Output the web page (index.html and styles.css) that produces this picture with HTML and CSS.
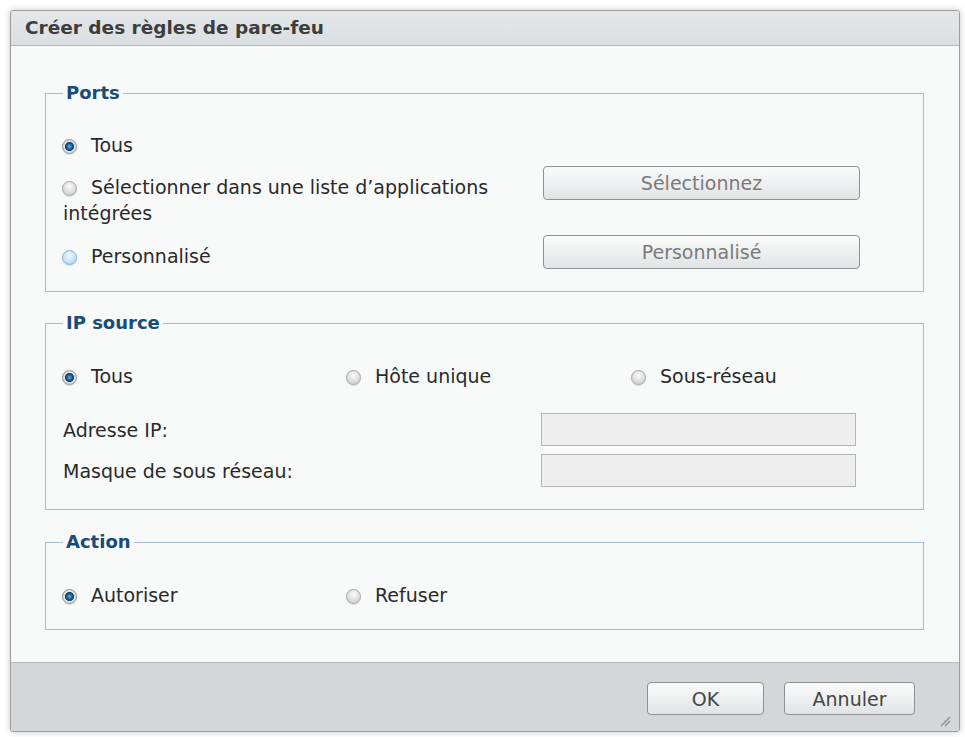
FILE: index.html
```html
<!DOCTYPE html>
<html lang="fr">
  <head>
    <meta charset="UTF-8" />
    <title>Créer des règles de pare-feu</title>
    <link rel="stylesheet" href="styles.css">
  </head>
  <body>
    <div class="dialog">
      <div class="dialog-title">Créer des règles de pare-feu</div>

      <div class="dialog-body">
        <!-- Ports -->
        <fieldset class="group group-ports">
          <legend>Ports</legend>
          <div class="port-row">
            <label class="radio"><span class="radio-dot checked"></span>Tous</label>
          </div>
          <div class="port-row port-row-btn">
            <label class="radio"><span class="radio-dot"></span>Sélectionner dans une liste d’applications intégrées</label>
            <button type="button" class="btn btn-wide">Sélectionnez</button>
          </div>
          <div class="port-row port-row-btn">
            <label class="radio"><span class="radio-dot hover"></span>Personnalisé</label>
            <button type="button" class="btn btn-wide">Personnalisé</button>
          </div>
        </fieldset>

        <!-- IP source -->
        <fieldset class="group group-ip">
          <legend>IP source</legend>
          <div class="radio-line">
            <label class="radio"><span class="radio-dot checked"></span>Tous</label>
            <label class="radio"><span class="radio-dot"></span>Hôte unique</label>
            <label class="radio"><span class="radio-dot"></span>Sous-réseau</label>
          </div>
          <div class="field-row">
            <span class="field-label">Adresse IP:</span>
            <input type="text" class="field-input" disabled />
          </div>
          <div class="field-row field-row-next">
            <span class="field-label">Masque de sous réseau:</span>
            <input type="text" class="field-input" disabled />
          </div>
        </fieldset>

        <!-- Action -->
        <fieldset class="group group-action">
          <legend>Action</legend>
          <div class="radio-line">
            <label class="radio"><span class="radio-dot checked"></span>Autoriser</label>
            <label class="radio"><span class="radio-dot"></span>Refuser</label>
          </div>
        </fieldset>
      </div>

      <div class="dialog-footer">
        <button type="button" class="btn btn-ok">OK</button>
        <button type="button" class="btn btn-cancel">Annuler</button>
      </div>

      <svg class="grip" width="12" height="12" viewBox="0 0 12 12">
        <line x1="2" y1="11" x2="11" y2="2" stroke="#8c8f92" stroke-width="1.2" />
        <line x1="6" y1="11" x2="11" y2="6" stroke="#8c8f92" stroke-width="1.2" />
      </svg>
    </div>
  </body>
</html>
```

FILE: styles.css
```css
* {
  box-sizing: border-box;
}

body {
  margin: 0;
  background: #ffffff;
  font-family: "DejaVu Sans", Verdana, sans-serif;
  font-size: 19px;
  color: #2a2a2a;
}

/* fenêtre */
.dialog {
  position: relative;
  width: 950px;
  height: 722px;
  margin: 10px;
  display: flex;
  flex-direction: column;
  border: 1px solid #9d9d9d;
  border-radius: 3px;
  background: #f8f9f9;
  box-shadow: 0 0 7px rgba(0, 0, 0, 0.22);
  overflow: hidden;
}

.dialog-title {
  height: 35px;
  line-height: 34px;
  padding-left: 14px;
  flex-shrink: 0;
  background: linear-gradient(#e4e7ea, #dbdfe2);
  border-bottom: 1px solid #b3b7ba;
  font-size: 18.5px;
  font-weight: bold;
  color: #3d3d3d;
}

.dialog-body {
  flex: 1;
  padding: 36px 35px 0 34px;
}

/* groupes */
.group {
  margin: 0;
  min-width: 0;
  border: 1px solid #a3bfd5;
  padding: 0 17px 22px;
}

.group legend {
  padding: 0 3px;
  line-height: 22px;
  font-size: 18px;
  font-weight: bold;
  color: #194b78;
}

.group-ports {
  padding-top: 28px;
}

.group-ip {
  margin-top: 20px;
  padding-top: 29px;
}

.group-action {
  margin-top: 21px;
  padding-top: 29px;
  padding-bottom: 21px;
}

/* boutons radio */
.radio {
  display: block;
  line-height: 26px;
}

.radio-dot {
  display: inline-block;
  width: 15px;
  height: 15px;
  margin-left: -1px;
  margin-right: 14px;
  vertical-align: -2px;
  border-radius: 50%;
  border: 1px solid #a5a5a5;
  background: radial-gradient(circle at 50% 35%, #fbfbfb, #c6c6c6);
  box-shadow: 0 1px 1px rgba(0, 0, 0, 0.12);
}

.radio-dot.checked {
  border-color: #979797;
  background: radial-gradient(circle at 50% 50%, #63b0e4 0, #2068a0 2.4px, #113f66 4.2px, #e9e9e9 4.9px, #c4c4c4 7.5px);
}

.radio-dot.hover {
  border-color: #82b3d8;
  background: radial-gradient(circle at 50% 35%, #f2f9ff, #a3d0f0);
}

/* Ports */
.port-row {
  display: grid;
  grid-template-columns: 470px 317px;
  column-gap: 10px;
  align-items: start;
  margin-bottom: 8px;
}

.port-row-btn .radio {
  padding-top: 8px;
}

.port-row-btn + .port-row-btn {
  margin-top: 9px;
}

.port-row:last-child {
  margin-bottom: 0;
}

/* IP source */
.radio-line {
  display: grid;
  grid-template-columns: 284px 285px 284px;
}

.field-row {
  display: grid;
  grid-template-columns: 478px 315px;
  align-items: center;
  margin-top: 24px;
}

.field-row-next {
  margin-top: 8px;
}

.field-input {
  height: 33px;
  margin: 0;
  border: 1px solid #b5b5b5;
  background: #eeeeee;
}

/* boutons */
.btn {
  height: 34px;
  padding: 0;
  border: 1px solid #8e9295;
  border-radius: 4px;
  background: linear-gradient(#fbfbfb, #e1e3e5);
  font-family: "DejaVu Sans", Verdana, sans-serif;
  font-size: 19px;
  color: #7a7a7a;
  cursor: pointer;
}

.btn-wide {
  width: 317px;
}

.dialog-footer {
  height: 69px;
  flex-shrink: 0;
  display: flex;
  justify-content: flex-end;
  gap: 20px;
  padding: 19px 44px 0 0;
  background: #d3d7da;
  border-top: 1px solid #b7bbbe;
}

.btn-ok,
.btn-cancel {
  height: 33px;
  color: #454545;
}

.btn-ok {
  width: 117px;
}

.btn-cancel {
  width: 131px;
}

.grip {
  position: absolute;
  right: 8px;
  bottom: 4px;
}
```
